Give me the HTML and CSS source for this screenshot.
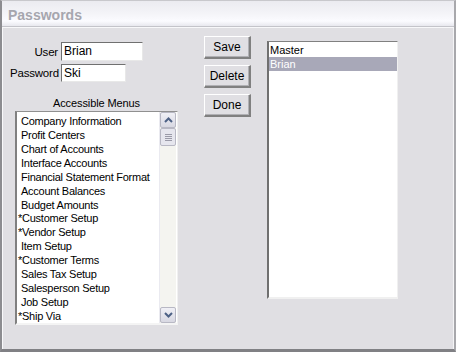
FILE: index.html
```html
<!DOCTYPE html>
<html>
  <head>
    <title>Passwords</title>
    <link rel="stylesheet" href="styles.css">
  </head>
  <body>
    <div class="window">
      <div class="titlebar">Passwords</div>
      <div class="client">
        <div class="left-col">
          <div class="field">
            <label class="field-label">User</label>
            <div class="textbox user-box">Brian</div>
          </div>
          <div class="field">
            <label class="field-label">Password</label>
            <div class="textbox pass-box">Ski</div>
          </div>
          <div class="menus-title">Accessible Menus</div>
          <div class="menu-list">
            <div class="menu-items">
              <div class="item">Company Information</div>
              <div class="item">Profit Centers</div>
              <div class="item">Chart of Accounts</div>
              <div class="item">Interface Accounts</div>
              <div class="item">Financial Statement Format</div>
              <div class="item">Account Balances</div>
              <div class="item">Budget Amounts</div>
              <div class="item star">*Customer Setup</div>
              <div class="item star">*Vendor Setup</div>
              <div class="item">Item Setup</div>
              <div class="item star">*Customer Terms</div>
              <div class="item">Sales Tax Setup</div>
              <div class="item">Salesperson Setup</div>
              <div class="item">Job Setup</div>
              <div class="item star">*Ship Via</div>
            </div>
            <div class="scrollbar">
              <div class="sb-btn">
                <svg width="9" height="6" viewBox="0 0 9 6"><path d="M1 5 L4.5 1.5 L8 5" fill="none" stroke="#4d6185" stroke-width="2"/></svg>
              </div>
              <div class="sb-thumb">
                <span></span><span></span><span></span><span></span>
              </div>
              <div class="sb-track"></div>
              <div class="sb-btn">
                <svg width="9" height="6" viewBox="0 0 9 6"><path d="M1 1 L4.5 4.5 L8 1" fill="none" stroke="#4d6185" stroke-width="2"/></svg>
              </div>
            </div>
          </div>
        </div>
        <div class="buttons">
          <button class="btn">Save</button>
          <button class="btn">Delete</button>
          <button class="btn btn-last">Done</button>
        </div>
        <div class="user-list">
          <div class="user">Master</div>
          <div class="user selected">Brian</div>
        </div>
      </div>
    </div>
  </body>
</html>
```

FILE: styles.css
```css
body {
  margin: 0;
  font-family: "Liberation Sans", Arial, sans-serif;
  font-size: 11px;
  color: #000;
  background: #e0dfe3;
}
.window {
  width: 456px;
  height: 352px;
  box-sizing: border-box;
  border-left: 2px solid #8c8c90;
  border-top: 1px solid #c8c8cc;
  border-right: 2px solid #a8a8ac;
  border-bottom: 3px solid #808084;
  background: #e0dfe3;
  display: flex;
  flex-direction: column;
}
.titlebar {
  height: 26px;
  box-sizing: border-box;
  padding: 6px 0 0 6px;
  font-weight: bold;
  font-size: 14px;
  color: #a6a6ae;
  background: linear-gradient(#ebebf0 0%, #f4f4f8 50%, #fbfbff 80%, #e8e8ee 100%);
  border-bottom: 1px solid #c4c4ca;
}
.client {
  flex: 1;
  display: flex;
  border-left: 1px solid #f8f8fa;
  border-right: 1px solid #f4f4f6;
  border-top: 1px solid #f8f8fa;
}
.left-col {
  width: 176px;
  padding-left: 12px;
  padding-top: 14px;
}
.field {
  display: flex;
  align-items: center;
  margin-bottom: 3px;
  margin-left: -5px;
}
.field-label {
  width: 48px;
  text-align: right;
  margin-right: 3px;
  font-size: 11.5px;
  letter-spacing: -0.2px;
  white-space: nowrap;
}
.textbox {
  height: 19px;
  box-sizing: border-box;
  background: #fff;
  border-top: 1px solid #707070;
  border-left: 1px solid #707070;
  border-right: 1px solid #e8e8e8;
  border-bottom: 1px solid #e8e8e8;
  padding: 1px 0 0 2px;
  font-size: 12px;
}
.user-box {
  width: 82px;
}
.pass-box {
  width: 65px;
  height: 18px;
}
.menus-title {
  margin-top: 15px;
  width: 163px;
  text-align: center;
  height: 14px;
  letter-spacing: -0.1px;
}
.menu-list {
  width: 163px;
  height: 214px;
  box-sizing: border-box;
  display: flex;
  background: #fff;
  border-top: 1px solid #909090;
  border-left: 2px solid #808080;
  border-right: 1px solid #f0f0f0;
  border-bottom: 2px solid #f4f4f4;
}
.menu-items {
  flex: 1;
  padding-top: 2px;
  padding-left: 4px;
}
.item {
  height: 13.93px;
  line-height: 14px;
  letter-spacing: -0.25px;
  white-space: nowrap;
}
.item.star {
  margin-left: -3px;
}
.scrollbar {
  width: 16px;
  display: flex;
  flex-direction: column;
  background: #f4f4f0;
  border-left: 1px solid #eaeaf0;
  margin-right: 1px;
}
.sb-btn {
  height: 16px;
  box-sizing: border-box;
  border: 1px solid #b8b8c4;
  border-radius: 2px;
  background: linear-gradient(#f0f0f6, #d8d8e2);
  display: flex;
  align-items: center;
  justify-content: center;
}
.sb-thumb {
  height: 18px;
  box-sizing: border-box;
  border: 1px solid #b8b8c4;
  border-radius: 2px;
  background: #e6e6ee;
  display: flex;
  flex-direction: column;
  align-items: center;
  justify-content: center;
  gap: 1px;
}
.sb-thumb span {
  display: block;
  width: 7px;
  height: 1px;
  background: #9a9aa8;
}
.sb-track {
  flex: 1;
}
.buttons {
  display: flex;
  flex-direction: column;
  padding-top: 8px;
  margin-left: 13px;
}
.btn {
  width: 47px;
  height: 23px;
  margin-bottom: 6px;
  padding: 0;
  font-family: "Liberation Sans", Arial, sans-serif;
  font-size: 12px;
  color: #000;
  background: #e0dfe3;
  border-top: 1px solid #fff;
  border-left: 1px solid #fff;
  border-right: 2px solid #808080;
  border-bottom: 2px solid #808080;
  box-shadow: inset -1px -1px 0 #b0b0b4;
}
.btn-last {
  margin-bottom: 0;
}
.user-list {
  margin-left: 16px;
  margin-top: 13px;
  width: 131px;
  height: 258px;
  box-sizing: border-box;
  background: #fff;
  border-top: 1px solid #808080;
  border-left: 2px solid #707070;
  border-right: 1px solid #f0f0f0;
  border-bottom: 2px solid #f0f0f0;
  padding-top: 1px;
}
.user {
  height: 14px;
  line-height: 14px;
  padding-left: 1px;
  font-size: 11px;
}
.user.selected {
  background: #a8a8b8;
  color: #fff;
}
```
